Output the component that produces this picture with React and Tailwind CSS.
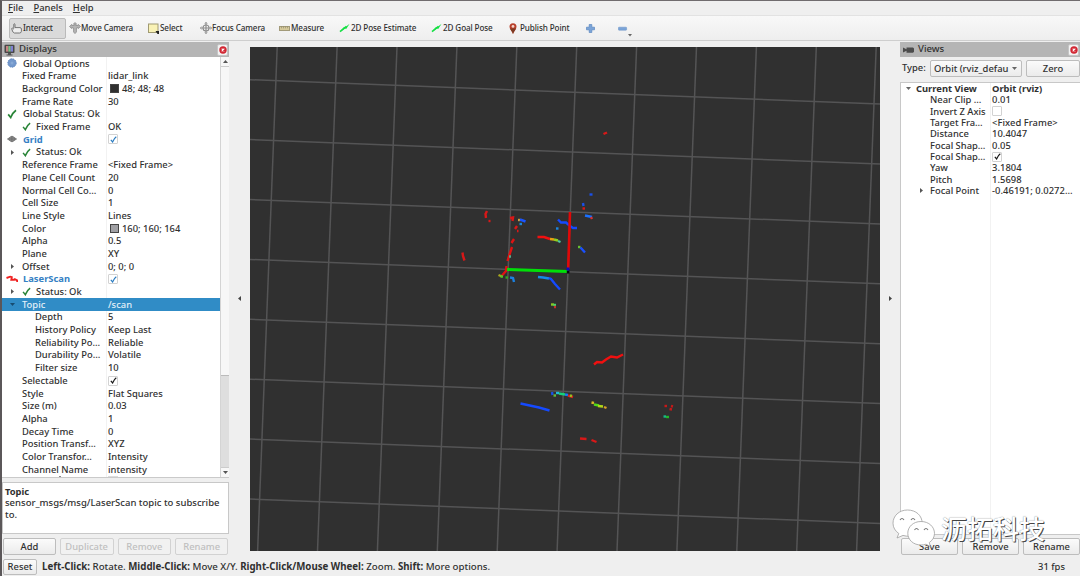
const displayRows = [
  { kind: "group", icon: "gear", name: "Global Options" },
  { name: "Fixed Frame", value: "lidar_link" },
  { name: "Background Color", value: "48; 48; 48", swatch: "bg-[#303030]" },
  { name: "Frame Rate", value: "30" },
  { kind: "group", icon: "ok", name: "Global Status: Ok" },
  { kind: "status", name: "Fixed Frame", value: "OK" },
  { kind: "display", icon: "grid", name: "Grid", check: "blue" },
  { kind: "status", name: "Status: Ok", arrow: "right" },
  { name: "Reference Frame", value: "<Fixed Frame>" },
  { name: "Plane Cell Count", value: "20" },
  { name: "Normal Cell Co…", value: "0" },
  { name: "Cell Size", value: "1" },
  { name: "Line Style", value: "Lines" },
  { name: "Color", value: "160; 160; 164", swatch: "bg-[#a0a0a4]" },
  { name: "Alpha", value: "0.5" },
  { name: "Plane", value: "XY" },
  { name: "Offset", value: "0; 0; 0", arrow: "right" },
  { kind: "display", icon: "laser", name: "LaserScan", check: "blue" },
  { kind: "status", name: "Status: Ok", arrow: "right" },
  { name: "Topic", value: "/scan", arrow: "down", selected: true },
  { kind: "child", name: "Depth", value: "5" },
  { kind: "child", name: "History Policy", value: "Keep Last" },
  { kind: "child", name: "Reliability Po…", value: "Reliable" },
  { kind: "child", name: "Durability Po…", value: "Volatile" },
  { kind: "child", name: "Filter size", value: "10" },
  { name: "Selectable", check: "black" },
  { name: "Style", value: "Flat Squares" },
  { name: "Size (m)", value: "0.03" },
  { name: "Alpha", value: "1" },
  { name: "Decay Time", value: "0" },
  { name: "Position Transf…", value: "XYZ" },
  { name: "Color Transfor…", value: "Intensity" },
  { name: "Channel Name", value: "intensity" },
];

const viewRows = [
  { name: "Near Clip …", value: "0.01" },
  { name: "Invert Z Axis", check: "empty" },
  { name: "Target Fra…", value: "<Fixed Frame>" },
  { name: "Distance", value: "10.4047" },
  { name: "Focal Shap…", value: "0.05" },
  { name: "Focal Shap…", check: "black" },
  { name: "Yaw", value: "3.1804" },
  { name: "Pitch", value: "1.5698" },
  { name: "Focal Point", value: "-0.46191; 0.0272…", arrow: "right" },
];

// laser returns: [color, polyline points]
const scan = [
  ["#d81818", "603.5,134 607,132.5"],
  ["#d81818", "487,211 485.5,214 486,218"],
  ["#d81818", "488.5,221 490.5,221"],
  ["#d81818", "510,218 513,217.5 512.5,221"],
  ["#d81818", "515,229 517,226"],
  ["#d81818", "517,231 518.5,231"],
  ["#e01212", "514,239 511.5,243"],
  ["#e01212", "512,247 510,253 507.5,261"],
  ["#e01212", "506.5,266 506,271 502,275.5"],
  ["#d81818", "462.5,252.5 463,256 464.5,260.5"],
  ["#55aa88", "509,256.5 511,256.5"],
  ["#d0a040", "518,220 520.5,220"],
  ["#1a55ff", "520,219.5 525.5,221.5"],
  ["#1b86d8", "519.5,224 522,224"],
  ["#a8a81c", "498.5,275 502,276.5"],
  ["#50c828", "500.5,276.5 503,276.5"],
  ["#30a820", "505.5,277.5 508,277.5"],
  ["#1b80e0", "510,277.5 513,278 514,282"],
  ["#1a50e8", "589.5,194.5 592.5,194.5"],
  ["#1a50e8", "583,203 583.5,206"],
  ["#d81818", "582.5,208.5 585,208.5"],
  ["#1a70ff", "585,215.5 592,217"],
  ["#d83030", "591,217 592,219"],
  ["#154aff", "558,219.5 561,222.5 566,222.5 570,226 573,228 577,228"],
  ["#1b86e0", "556,228.5 558.5,228.5"],
  ["#f01010", "537.5,237 544,237 550,239"],
  ["#e8a010", "550,239 554,239.5"],
  ["#90d020", "554,239.5 558,240.5"],
  ["#50c8a0", "558,241 560.5,242"],
  ["#68c030", "578,247 580.5,247"],
  ["#1a50ff", "580.5,247.5 585,252.5"],
  ["#1588e8", "538,277 543,277.5 549,278.5"],
  ["#154aff", "549,278 551,279 555,284 560,289.5"],
  ["#88c820", "551,304.5 554,304.5"],
  ["#40d870", "553.5,305 556,305"],
  ["#c83028", "554,307 556,307"],
  ["#f01010", "594,364.5 597,362 602,362.5 606,359.5 611,356.5 617,357.5 623,354.5"],
  ["#154aff", "520.5,403.5 539,407.5 549.5,410.5"],
  ["#1a50e8", "552,392 552.5,395"],
  ["#68b838", "553.5,395.5 556,395.5"],
  ["#20b8d8", "556,393 559,393"],
  ["#18d078", "559,393.5 565,394.5"],
  ["#1a78f0", "565,394.5 568,395"],
  ["#d82020", "568,395.5 573,397"],
  ["#98c020", "570,395.5 572,396"],
  ["#d8b828", "591.5,402.5 594,403"],
  ["#50d818", "594,404.5 599,405.5"],
  ["#b0d818", "598,406 603,406.5"],
  ["#d8a028", "604,407 606.5,408"],
  ["#d81818", "580,438.5 586.5,439"],
  ["#d81818", "591.5,440 596.5,442"],
  ["#c81818", "664.5,406 667,406"],
  ["#c81818", "671,406 673,406.5"],
  ["#c81818", "669.5,409 672,409.5"],
  ["#18b888", "663.5,416.5 666,416.5"],
  ["#20b828", "666,417 669,417"],
];

const ROWS = [0, 1, 2, 3, 4, 5, 6, 7];
const COLS = [0, 1, 2, 3, 4, 5, 6, 7, 8, 9, 10];

function Scene() {
  return (
    <svg className="block h-[504px] w-[630px] bg-[#303030]" viewBox="250 47 630 504">
      <g stroke="#545455" strokeWidth="1.5">
        {ROWS.map((i) => (
          <line key={i} x1="250" y1={79.7 + i * 59.9} x2="880" y2={104.1 + i * 59.9} />
        ))}
        {COLS.map((i) => (
          <line key={i} x1={277.2 + i * 59.9} y1="47" x2={257.6 + i * 59.9} y2="551" />
        ))}
      </g>
      <g fill="none" strokeWidth="2.4">
        {scan.map(([color, points], i) => (
          <polyline key={i} points={points} stroke={color} />
        ))}
      </g>
      <path d="M570 212L568.2 269" stroke="#e00808" strokeWidth="2.6" />
      <path d="M507 269.4L568 271.4" stroke="#00df08" strokeWidth="3" />
      <path d="M566.8 270.5h2.6v3h-2.6z" fill="#050808" />
      <path d="M566.5 267.5h3v3h-3z" fill="#0808c8" />
    </svg>
  );
}

function Tick({ className }) {
  return (
    <svg className={className} viewBox="0 0 10 10" fill="none" stroke="currentColor">
      <path d="M1.2 5.4L3.7 8.5C5 5.2 6.5 3 9 1.2" strokeWidth="1.7" />
    </svg>
  );
}

function CheckBox({ type }) {
  return (
    <span className="flex size-[10px] items-center justify-center rounded-[1px] border border-[#d2d2d2] bg-white">
      {type === "blue" && <Tick className="size-[7px] text-[#2a7cc0]" />}
      {type === "black" && <Tick className="size-[7px] text-[#181818]" />}
    </span>
  );
}

function Arrow({ dir, className = "" }) {
  const d = { right: "M1 0L4 2.5L1 5z", left: "M4 0L1 2.5L4 5z", down: "M0 1L5 1L2.5 4z", up: "M0 4L5 4L2.5 1z" }[dir];
  return (
    <svg className={`size-[5px] shrink-0 ${className}`} viewBox="0 0 5 5" fill="currentColor">
      <path d={d} />
    </svg>
  );
}

function RowIcon({ type }) {
  if (type === "ok") return <Tick className="size-[10px] text-[#288437]" />;
  if (type === "gear")
    return (
      <svg className="size-[10px]" viewBox="0 0 10 10">
        <circle cx="5" cy="5" r="4.2" fill="#7398cc" stroke="#6088c0" strokeWidth="1" strokeDasharray="1.6 0.9" />
        <circle cx="5" cy="5" r="1.5" fill="#86a9d6" />
      </svg>
    );
  if (type === "grid")
    return (
      <svg className="size-[10px]" viewBox="0 0 10 10" stroke="#6e6e6e" strokeWidth="0.9" fill="#a4a4a4">
        <path d="M0.5 5L5 2.1L9.5 5L5 7.9zM2 4L6.7 6.8M3.5 3L8 5.9M2 6L6.7 3.1M3.5 7L8 4.1" />
      </svg>
    );
  return (
    <svg className="h-[8px] w-[12px]" viewBox="0 0 12 8" fill="none" stroke="#f02020" strokeWidth="1.9">
      <path d="M0.5 3L4.2 1.7L5.8 2.2L5.3 4.8H8.2L8.8 4.2L11.2 5.4V7" />
    </svg>
  );
}

function DisplayRow({ row }) {
  const lead = row.icon !== undefined;
  return (
    <div
      className={`flex h-[12.7px] items-center leading-none whitespace-nowrap ${row.selected ? "bg-[#308cc6] text-[#e4f0f8]" : ""}`}
    >
      <div className="flex w-[104px] shrink-0 items-center">
        <span className="flex w-[20px] shrink-0 items-center justify-center">
          {lead && <RowIcon type={row.icon} />}
          {row.arrow && <Arrow dir={row.arrow} className={row.selected ? "text-[#174c70]" : "text-[#555]"} />}
        </span>
        {row.kind === "status" && <Tick className="mr-[5px] size-[9px] text-[#288437]" />}
        <span
          className={
            row.kind === "display"
              ? "pl-px font-bold text-[#3580c4]"
              : row.kind === "child"
                ? "pl-[13px]"
                : row.kind === "group"
                  ? "pl-px"
                  : ""
          }
        >
          {row.name}
        </span>
      </div>
      <div className="flex items-center pl-[2px]">
        {row.swatch && <span className={`mr-[3px] ml-[2px] size-[9px] border border-[#444] ${row.swatch}`} />}
        {row.check && <CheckBox type={row.check} />}
        {row.value}
      </div>
    </div>
  );
}

function CloseButton() {
  return (
    <span className="flex h-[12px] w-[11px] items-center justify-center rounded-[2px] border border-[#c5c5c5] bg-[#f2f2f2]">
      <svg className="size-[8px]" viewBox="0 0 8 8">
        <circle cx="4" cy="4" r="3.7" fill="#d22632" />
        <path d="M2.7 2.7L5.3 5.3M5.3 2.7L2.7 5.3" stroke="#fff" strokeWidth="1.1" />
      </svg>
    </span>
  );
}

function Button({ children, className = "", disabled }) {
  return (
    <button
      disabled={disabled}
      className={`flex items-center justify-center rounded-[2px] border leading-none ${disabled ? "border-[#d2d2d2] bg-[#f1f1f1] text-[#bfbfbf]" : "border-[#bdbdbd] bg-linear-to-b from-[#fbfbfb] to-[#ebebeb]"} ${className}`}
    >
      {children}
    </button>
  );
}

function DisplaysPanel() {
  return (
    <aside className="flex w-[227px] shrink-0 flex-col">
      <header className="flex h-[15px] shrink-0 items-center bg-[#b5b5b5] pr-[1px] pl-[2px] text-[9.6px]">
        <svg className="mr-[4px] h-[12px] w-[11px]" viewBox="0 0 11 12">
          <rect x="0.5" y="0.7" width="10" height="8.3" rx="1" fill="#484848" />
          <path d="M2 2h2.4v5.6H2z" fill="#c58282" />
          <path d="M4.4 2h2.3v5.6H4.4z" fill="#76c286" />
          <path d="M6.7 2H9v5.6H6.7z" fill="#8080d2" />
          <path d="M4 9h3v1.4h1.5v1H2.5v-1H4z" fill="#555" />
        </svg>
        <span className="flex-1">Displays</span>
        <CloseButton />
      </header>
      <div className="flex h-[421px] shrink-0 border-b border-[#cacaca] bg-white">
        <div className="w-[218px] overflow-hidden bg-linear-to-r from-transparent from-[104px] via-[#e5e5e5] via-[104px] to-transparent to-[105px]">
          {displayRows.map((row, i) => (
            <DisplayRow key={i} row={row} />
          ))}
          <div className="flex h-[2px]">
            <span className="ml-[57px] h-px w-[2px] bg-[#888]" />
            <span className="ml-[47px] h-[2px] w-[10px] bg-[#ddd]" />
          </div>
        </div>
        <div className="flex w-[9px] flex-col border-l border-[#d4d4d4] bg-[#dedede] text-[#555]">
          <div className="flex h-[10px] items-center justify-center border-b border-[#ccc] bg-[#f7f7f7]">
            <Arrow dir="up" />
          </div>
          <div className="h-[309px] border-b border-[#bbb] bg-[#f7f7f7]" />
          <div className="flex-1" />
          <div className="flex h-[10px] items-center justify-center border-t border-[#ccc] bg-[#f7f7f7]">
            <Arrow dir="down" />
          </div>
        </div>
      </div>
      <div className="mt-[4px] h-[52px] shrink-0 border border-[#c8c8c8] bg-white px-[2px] pt-[3px] leading-[11.4px]">
        <div className="font-bold">Topic</div>
        <p className="text-[9.5px] whitespace-nowrap">
          sensor_msgs/msg/LaserScan topic to subscribe
          <br />
          to.
        </p>
      </div>
      <div className="mt-[4px] flex gap-[4px] px-[1px]">
        <Button className="h-[17px] w-[53px]">Add</Button>
        <Button className="h-[17px] w-[54px]" disabled>Duplicate</Button>
        <Button className="h-[17px] w-[54px]" disabled>Remove</Button>
        <Button className="h-[17px] w-[53px]" disabled>Rename</Button>
      </div>
    </aside>
  );
}

function ViewsPanel() {
  return (
    <aside className="flex w-[180px] shrink-0 flex-col">
      <header className="flex h-[15px] shrink-0 items-center bg-[#b5b5b5] pr-px pl-[3px] text-[9.6px]">
        <svg className="mr-[4px] h-[8px] w-[11px]" viewBox="0 0 11 8" fill="#4c4c4c">
          <path d="M0 1.5L3.5 3.3V1.4H10L11 2.4V5.8L10 6.8H3.5V4.8L0 6.5z" />
        </svg>
        <span className="flex-1">Views</span>
        <CloseButton />
      </header>
      <div className="mt-[3px] flex h-[17px] shrink-0 items-center">
        <span className="w-[30px] pl-[2px]">Type:</span>
        <div className="flex h-[17px] w-[92px] items-center rounded-[2px] border border-[#bdbdbd] bg-linear-to-b from-[#fbfbfb] to-[#ebebeb] pr-[4px] pl-[3px] leading-[15px]">
          <span className="whitespace-nowrap">Orbit (rviz_defau</span>
          <Arrow dir="down" className="ml-auto text-[#666]" />
        </div>
        <Button className="ml-[4px] h-[17px] w-[54px]">Zero</Button>
      </div>
      <div className="mt-[5px] h-[453px] shrink-0 border border-r-0 border-[#c8c8c8] bg-white bg-linear-to-r from-transparent from-[89px] via-[#e5e5e5] via-[89px] to-transparent to-[90px] leading-none">
        <div className="flex h-[11.4px] items-center font-bold whitespace-nowrap">
          <span className="flex w-[15px] justify-center">
            <Arrow dir="down" className="text-[#666]" />
          </span>
          <span className="w-[76px]">Current View</span>
          <span>Orbit (rviz)</span>
        </div>
        {viewRows.map((row, i) => (
          <div key={i} className="flex h-[11.35px] items-center whitespace-nowrap">
            <span className="flex w-[29px] justify-end pr-[6px] text-[#555]">
              {row.arrow && <Arrow dir={row.arrow} />}
            </span>
            <span className="w-[62px]">{row.name}</span>
            {row.check ? <CheckBox type={row.check} /> : <span className="tracking-[0.05px]">{row.value}</span>}
          </div>
        ))}
      </div>
      <div className="mt-[3px] flex gap-[4px] pl-[1px]">
        <Button className="h-[17px] w-[57px]">Save</Button>
        <Button className="h-[17px] w-[57px]">Remove</Button>
        <Button className="h-[17px] w-[57px]">Rename</Button>
      </div>
    </aside>
  );
}

function CrossIcon() {
  return (
    <svg className="size-[12px]" viewBox="0 0 12 12" fill="none" stroke="#8c8c8c">
      <circle cx="6" cy="6" r="3" strokeWidth="1.1" />
      <path d="M6 0.5V11.5M0.5 6H11.5" strokeWidth="1.2" />
      <path d="M4.8 1.6L6 0.3L7.2 1.6M4.8 10.4L6 11.7L7.2 10.4M1.6 4.8L0.3 6L1.6 7.2M10.4 4.8L11.7 6L10.4 7.2" strokeWidth="0.8" />
    </svg>
  );
}

function MoveIcon() {
  return (
    <svg className="size-[12px]" viewBox="0 0 12 12" fill="#b5b5b5" stroke="#8a8a8a" strokeWidth="0.8">
      <path d="M6 0.5L7.6 2.2H6.7V3.5H9.2V2.4L11.5 4.5L9.2 6.6V5.5L7.4 6V10L6 11.6L4.6 10V6L2.8 5.5V6.6L0.5 4.5L2.8 2.4V3.5H5.3V2.2H4.4z" />
    </svg>
  );
}

function PoseArrow() {
  return (
    <svg className="h-[10px] w-[12px]" viewBox="0 0 12 10">
      <path d="M1.2 8.5L5 3.9L6.2 4.2L10.6 0.8L7.2 5.9L6.2 5.5z" fill="#15e044" />
      <path d="M1 8.6L7.5 3.3" stroke="#15e044" strokeWidth="1.6" />
    </svg>
  );
}

function Toolbar() {
  return (
    <div className="flex h-[26px] shrink-0 items-center border-t border-b border-t-[#e2e2e2] border-b-[#cecece] bg-linear-to-b from-[#f8f8f8] to-[#eeeeee] pt-px pl-[7px] text-[8.1px] tracking-[-0.1px] whitespace-nowrap">
      <div className="flex h-[21px] w-[57px] items-center rounded-[2px] border border-[#bababa] bg-[#dadada] pl-px">
        <svg className="mr-px size-[11px]" viewBox="0 0 11 11" fill="#eee" stroke="#666" strokeWidth="0.9">
          <path d="M2.8 5.5V1.2Q3.4 0.3 4 1.2V4.6H9Q10.4 4.7 10.4 6V8.3Q10.2 10 8.6 10H3.4Q1.4 9.8 0.7 5.5Q1.6 4.5 2.8 6.2" />
        </svg>
        Interact
      </div>
      <div className="ml-[3px] flex w-[79px] items-center"><MoveIcon />Move Camera</div>
      <div className="flex w-[52px] items-center">
        <svg className="mr-px size-[11px]" viewBox="0 0 11 11">
          <rect x="0.5" y="1" width="9.5" height="8.5" fill="#f9f2b6" stroke="#a09a72" />
          <path d="M7.5 8H11V11H9.5z" fill="#222" />
        </svg>
        Select
      </div>
      <div className="flex w-[79px] items-center"><CrossIcon />Focus Camera</div>
      <div className="flex w-[60px] items-center">
        <svg className="mr-[1px] h-[5px] w-[11px]" viewBox="0 0 11 5">
          <rect x="0.5" y="0.5" width="10" height="4" fill="#d5c99b" stroke="#a29a79" />
          <path d="M2.5 0.5V2.3M4.5 0.5V2.3M6.5 0.5V2.3M8.5 0.5V2.3" stroke="#8a8368" strokeWidth="0.6" />
        </svg>
        Measure
      </div>
      <div className="flex w-[92px] items-center"><PoseArrow />2D Pose Estimate</div>
      <div className="flex w-[78px] items-center"><PoseArrow />2D Goal Pose</div>
      <div className="flex w-[77px] items-center">
        <svg className="mr-[3px] h-[11px] w-[8px]" viewBox="0 0 8 11">
          <path d="M4 11C3 8 0.5 6.4 0.5 3.7A3.5 3.5 0 0 1 7.5 3.7C7.5 6.4 5 8 4 11z" fill="#b8402c" />
          <path d="M4 11C3.2 8.6 1.8 7.2 1 5.5H7C6.2 7.2 4.8 8.6 4 11z" fill="#7c3b24" />
          <circle cx="4" cy="3.4" r="1.4" fill="#f2d5cc" />
        </svg>
        Publish Point
      </div>
      <svg className="size-[9px]" viewBox="0 0 9 9">
        <path d="M3.2 0.5H5.8V3.2H8.5V5.8H5.8V8.5H3.2V5.8H0.5V3.2H3.2z" fill="#7ba4d8" stroke="#5a86c0" strokeWidth="0.7" />
      </svg>
      <svg className="mt-[7px] ml-[23px] h-[16px] w-[16px]" viewBox="0 0 16 16">
        <rect x="0.4" y="3.2" width="8.2" height="3" rx="0.6" fill="#7ba4d8" stroke="#6790c5" strokeWidth="0.5" />
        <path d="M10 10H14L12 12.5z" fill="#666" />
      </svg>
    </div>
  );
}

function Watermark() {
  return (
    <div className="absolute top-[508px] left-[890px] flex items-start">
      <svg className="h-[38px] w-[46px]" viewBox="0 0 46 38" fill="#fff" stroke="#a0a0a0" strokeWidth="0.8">
        <path d="M15.5 1C7 1 1 7 1 14.2C1 18.5 3.2 22 6.8 24.5L5 29L11 26.4Q14 27.4 18 27.2C26 26.5 30.2 20.5 30.2 14.5C30.2 6.5 24 1 15.5 1z" />
        <path d="M29 12.5C21 12.5 15.8 18 15.8 24.2C15.8 31 21.5 36 29 36Q31.5 36 34 35.2L38.3 37.5L37.3 33.5C40.5 31.5 42.5 28 42.5 24.4C42.5 18 37 12.5 29 12.5z" />
        <path d="M8 11Q10 8 12 11M19 11Q21 8 23 11M22.5 21Q24.5 18 26.5 21M32 21Q34 18 36 21" fill="none" stroke="#777" strokeWidth="1.1" />
      </svg>
      <span className="mt-[3px] ml-[3px] font-['Noto_Sans_CJK_SC',sans-serif] text-[26px] leading-[32px] text-white [text-shadow:1px_1px_0.5px_#444,0_0_1px_#777]">
        沥拓科技
      </span>
    </div>
  );
}

export default function App() {
  return (
    <div className="relative flex h-[576px] w-[1080px] flex-col overflow-hidden border-t border-l-2 border-t-[#706c6e] border-l-[#5b5759] bg-[#efefef] font-['Noto_Sans','Open_Sans',sans-serif] text-[9.4px] font-medium text-[#303030]">
      <nav className="flex h-[14px] shrink-0 items-center gap-[10px] pl-[6px] text-[9.4px]">
        <span><u>F</u>ile</span>
        <span><u>P</u>anels</span>
        <span><u>H</u>elp</span>
      </nav>
      <Toolbar />
      <main className="flex h-[514px] shrink-0 pt-px">
        <DisplaysPanel />
        <div className="flex w-[21px] shrink-0 items-center justify-center text-[#444]">
          <Arrow dir="left" />
        </div>
        <div className="w-[630px] shrink-0 pt-[5px]">
          <Scene />
        </div>
        <div className="flex w-[20px] shrink-0 items-center justify-center text-[#444]">
          <Arrow dir="right" />
        </div>
        <ViewsPanel />
      </main>
      <footer className="flex flex-1 items-center pt-[3px] pr-[15px] pl-px">
        <Button className="mr-[5px] h-[16px] w-[34px]">Reset</Button>
        <p className="flex-1 text-[9.7px] whitespace-nowrap">
          <b>Left-Click:</b> Rotate. <b>Middle-Click:</b> Move X/Y. <b>Right-Click/Mouse Wheel:</b> Zoom. <b>Shift:</b> More options.
        </p>
        <span>31 fps</span>
      </footer>
      <Watermark />
    </div>
  );
}
